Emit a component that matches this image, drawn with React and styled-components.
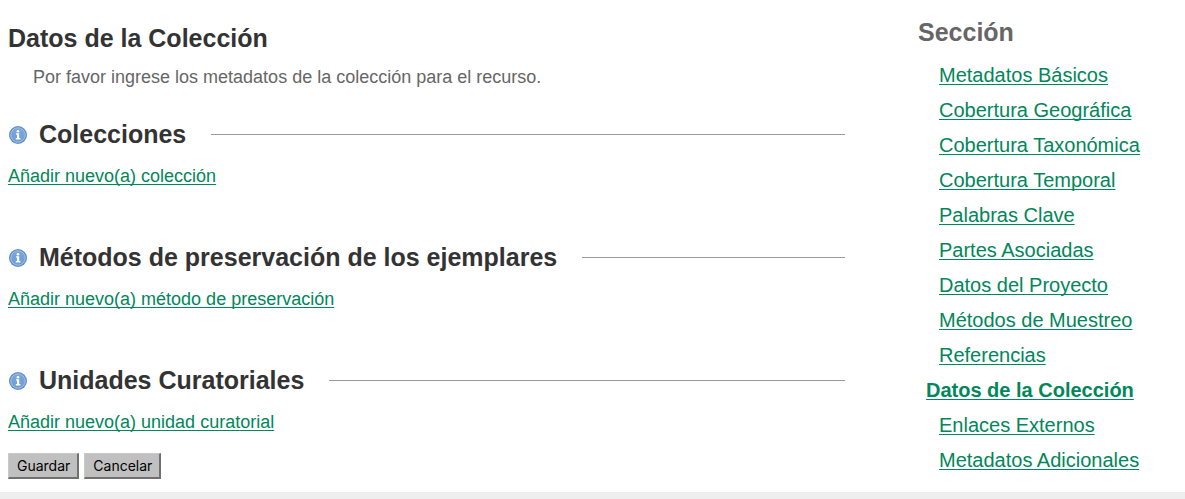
import React from "react";
import styled, { createGlobalStyle } from "styled-components";

const GlobalStyle = createGlobalStyle`
  * { box-sizing: border-box; }
  body {
    margin: 0;
    background: #eeeeee;
    color: #666666;
    font-family: "Liberation Sans", Arial, Helvetica, sans-serif;
  }
`;

const Page = styled.div`
  display: flex;
  align-items: flex-start;
  gap: 73px;
  padding: 16px 8px 13px;
  background: #ffffff;
`;

const Main = styled.main`
  flex: 1;
  min-width: 0;
  padding-top: 6px;
`;

const Title = styled.h1`
  margin: 0;
  font-size: 25px;
  line-height: 32px;
  color: #333333;
`;

const Intro = styled.p`
  margin: 11px 0 29px 25px;
  font-size: 18px;
  line-height: 24px;
`;

const Section = styled.section`
  margin-bottom: ${(p) => (p.$last ? 19 : 53)}px;
`;

const SectionHeader = styled.div`
  display: flex;
  align-items: center;
  margin-bottom: 14px;
`;

const SectionTitle = styled.h2`
  margin: 0 25px 0 11px;
  font-size: 25px;
  line-height: 32px;
  color: #333333;
`;

const Rule = styled.div`
  flex: 1;
  height: 1px;
  background: #999999;
`;

const Link = styled.a`
  display: block;
  width: fit-content;
  color: #00875a;
  font-size: ${(p) => (p.$large ? 20 : 18)}px;
  line-height: 24px;
  text-decoration: underline;
  text-decoration-thickness: 1px;
  text-underline-offset: 2px;
  text-decoration-skip-ink: none;

  &[aria-current] {
    font-weight: bold;
  }
`;

const InfoSvg = styled.svg`
  flex: none;
  display: block;
  width: 20px;
  height: 20px;
`;

const Actions = styled.div`
  display: flex;
  gap: 5px;
`;

const Button = styled.button`
  height: 26px;
  padding: 0 7px 0 8px;
  border: solid;
  border-width: 1px 2px 2px 1px;
  border-color: #c9c9c9 #707070 #707070 #c9c9c9;
  background: #c0c0c0;
  color: #000000;
  font-family: Inter, Roboto, sans-serif;
  font-size: 14px;
  line-height: 20px;
`;

const Sidebar = styled.aside`
  flex: none;
  width: 259px;
`;

const SidebarTitle = styled.h2`
  margin: 0 0 15px;
  font-size: 25px;
  line-height: 32px;
`;

const NavList = styled.ul`
  display: flex;
  flex-direction: column;
  gap: 11px;
  margin: 0;
  padding: 0;
  list-style: none;
`;

const NavItem = styled.li`
  padding-left: ${(p) => (p.$current ? 8 : 21)}px;
`;

function InfoIcon() {
  return (
    <InfoSvg viewBox="0 0 20 20" role="img" aria-label="Información">
      <defs>
        <linearGradient id="info-fill" x1="0" y1="0" x2="0" y2="1">
          <stop offset="0" stopColor="#7aa6da" />
          <stop offset="1" stopColor="#6f9dd2" />
        </linearGradient>
      </defs>
      <circle cx="10" cy="11" r="9" fill="#5f8fc8" />
      <circle cx="10" cy="11" r="7.2" fill="url(#info-fill)" stroke="#a3c2e6" strokeWidth="1" />
      <circle cx="10" cy="7.2" r="1.3" fill="#fff" />
      <path d="M8 9.2h3.2v4.8h1.2v1.5H7.8V14H9v-3.4H8z" fill="#fff" />
    </InfoSvg>
  );
}

const sections = [
  ["Colecciones", "Añadir nuevo(a) colección"],
  ["Métodos de preservación de los ejemplares", "Añadir nuevo(a) método de preservación"],
  ["Unidades Curatoriales", "Añadir nuevo(a) unidad curatorial"],
];

const currentPage = "Datos de la Colección";

const pages = [
  "Metadatos Básicos",
  "Cobertura Geográfica",
  "Cobertura Taxonómica",
  "Cobertura Temporal",
  "Palabras Clave",
  "Partes Asociadas",
  "Datos del Proyecto",
  "Métodos de Muestreo",
  "Referencias",
  currentPage,
  "Enlaces Externos",
  "Metadatos Adicionales",
];

export default function App() {
  return (
    <>
      <GlobalStyle />
      <Page>
        <Main>
          <Title>{currentPage}</Title>
          <Intro>Por favor ingrese los metadatos de la colección para el recurso.</Intro>
          {sections.map(([title, action], i) => (
            <Section key={title} $last={i === sections.length - 1}>
              <SectionHeader>
                <InfoIcon />
                <SectionTitle>{title}</SectionTitle>
                <Rule />
              </SectionHeader>
              <Link href="#">{action}</Link>
            </Section>
          ))}
          <Actions>
            <Button type="submit">Guardar</Button>
            <Button type="button">Cancelar</Button>
          </Actions>
        </Main>
        <Sidebar>
          <SidebarTitle>Sección</SidebarTitle>
          <nav aria-label="Sección">
            <NavList>
              {pages.map((page) => (
                <NavItem key={page} $current={page === currentPage}>
                  <Link href="#" $large aria-current={page === currentPage ? "page" : undefined}>
                    {page}
                  </Link>
                </NavItem>
              ))}
            </NavList>
          </nav>
        </Sidebar>
      </Page>
    </>
  );
}
